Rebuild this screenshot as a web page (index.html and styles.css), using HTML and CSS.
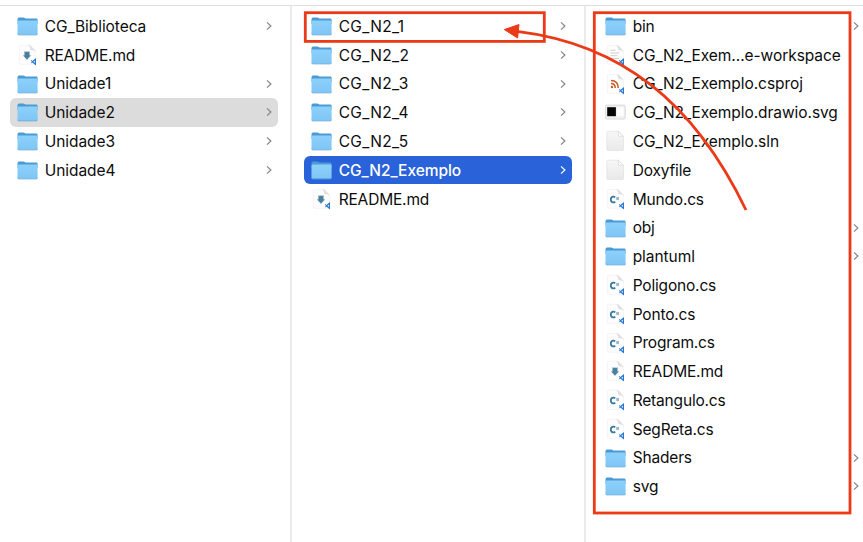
FILE: index.html
```
<!DOCTYPE html>
<html lang="pt">
<head>
<meta charset="utf-8">
<title>Unidade2</title>
<link rel="stylesheet" href="styles.css">
</head>
<body>
<svg class="defs" aria-hidden="true">
  <defs>
    <linearGradient id="folder-face" x1="0" y1="0" x2="0" y2="1"><stop offset="0" stop-color="#8dd0fb"/><stop offset="1" stop-color="#7fc6f5"/></linearGradient>
    <linearGradient id="paper" x1="0" y1="0" x2="0" y2="1"><stop offset="0" stop-color="#f7f7f7"/><stop offset="1" stop-color="#e9e9e9"/></linearGradient>
    <symbol id="folder" viewBox="0 0 21 22">
      <path d="M.5 4.2Q.5 2.6 2 2.6h4.300q.8 0 1.400.5l.7.5h11q1.200 0 1.200 1.400V9H.5z" fill="#4a9bd5"/>
      <path d="M.5 7Q.5 5.500 1.700 5.500h17.600q1.300 0 1.300 1.200v11.800q0 1.300-1.300 1.300H1.700q-1.200 0-1.200-1.300z" fill="url(#folder-face)"/>
      <path d="M.7 18.700q.1 1.200 1.200 1.200h17.300q1.200 0 1.300-1.200" fill="none" stroke="#5ca8d9" stroke-width=".8"/>
    </symbol>
    <symbol id="page" viewBox="0 0 21 22">
      <path d="M3.500 1.300h9.800l5.300 5.400v12.500q0 1.200-1.200 1.200H3.500q-1.200 0-1.200-1.200V2.500q0-1.200 1.200-1.200z" fill="#fdfdfd" stroke="#efefef" stroke-width=".6"/>
      <path d="M11 1.500h2.300l4.800 5.200v1q-1-1.400-3.600-1.400-1.300 0-1.300-1.500Q13.200 2 11 1.500z" fill="#dedede"/>
    </symbol>
    <symbol id="code-badge" viewBox="0 0 21 22">
      <path d="M18.400 15.200v5L15.300 17.700z" fill="#fff" stroke="#2877d3" stroke-width="1.200"/><path d="M14.200 16.400l2.100 1.900M14.200 19l2.100-1.900" stroke="#2877d3" stroke-width="1"/>
    </symbol>
    <symbol id="blank" viewBox="0 0 21 22">
      <path d="M2.800 1.200h10.700l5 5.200v13q0 1.100-1.100 1.100H2.900q-1.100 0-1.100-1.100V2.300q0-1.100 1-1.100z" fill="url(#paper)" stroke="#dedede" stroke-width=".6"/>
      <path d="M13.400 1.300v3.800q0 1.300 1.300 1.300h3.700z" fill="#fbfbfb" stroke="#d3d3d3" stroke-width=".6"/>
    </symbol>
    <symbol id="markdown" viewBox="0 0 21 22">
      <use href="#page"/><path d="M7.700 7.600l1.300.7 1-.7 1 .7 1.300-.7v4h1.300L10 15.500l-3.600-3.900h1.300z" fill="#497f9e" stroke="#497f9e" stroke-width=".4"/><use href="#code-badge"/>
    </symbol>
    <symbol id="csharp" viewBox="0 0 21 22">
      <use href="#page"/><path d="M10.200 9.300q-1-.8-2.200-.6-2.200.4-2.200 2.800 0 2.700 2.500 2.900 1 0 2-.7" fill="none" stroke="#36799f" stroke-width="1.700"/><path d="M12 8.900v3.200M13.200 8.900v3.200M11.300 9.900h2.600M11.300 11.100h2.600" stroke="#5f94b5" stroke-width=".6"/><use href="#code-badge"/>
    </symbol>
    <symbol id="feed" viewBox="0 0 21 22">
      <use href="#page"/><circle cx="7" cy="14" r="1.200" fill="#c45a26"/><path d="M6 10.600q4.100.1 4.200 4.300M6 7.400q7.200.2 7.300 7.500" fill="none" stroke="#c45a26" stroke-width="1.500"/><use href="#code-badge"/>
    </symbol>
    <symbol id="text" viewBox="0 0 21 22">
      <use href="#page"/><path d="M5.500 6.300h5M5.500 9h8.500M5.500 11.700h7M5.500 14.400h8.500" stroke="#cecece" stroke-width="1"/><use href="#code-badge"/>
    </symbol>
    <symbol id="drawing" viewBox="0 0 21 22">
      <rect x=".3" y="4.100" width="20" height="14" rx="1.300" fill="#f0f0f0" stroke="#d0d0d0" stroke-width=".7"/><path d="M2.200 6.200h8.700v9H2.200z" fill="#050505"/><path d="M12.200 6.200h2.500v9h-2.500zM15.300 6.200h3.200v9h-3.200z" fill="#fff"/>
    </symbol>
    <symbol id="chevron" viewBox="0 0 6 10"><path d="M1 1.400 4.900 5 1 8.600" fill="none" stroke="currentColor" stroke-width="1.200"/></symbol>
  </defs>
</svg>
<main class="browser">
  <ul class="column">
    <li class="row"><svg class="icon"><use href="#folder"/></svg><span class="name">CG_Biblioteca</span><svg class="chevron"><use href="#chevron"/></svg></li>
    <li class="row"><svg class="icon"><use href="#markdown"/></svg><span class="name tight">README.md</span></li>
    <li class="row"><svg class="icon"><use href="#folder"/></svg><span class="name">Unidade1</span><svg class="chevron"><use href="#chevron"/></svg></li>
    <li class="row open"><svg class="icon"><use href="#folder"/></svg><span class="name">Unidade2</span><svg class="chevron"><use href="#chevron"/></svg></li>
    <li class="row"><svg class="icon"><use href="#folder"/></svg><span class="name">Unidade3</span><svg class="chevron"><use href="#chevron"/></svg></li>
    <li class="row"><svg class="icon"><use href="#folder"/></svg><span class="name">Unidade4</span><svg class="chevron"><use href="#chevron"/></svg></li>
  </ul>
  <ul class="column">
    <li class="row"><svg class="icon"><use href="#folder"/></svg><span class="name wide">CG_N2_1</span><svg class="chevron"><use href="#chevron"/></svg></li>
    <li class="row"><svg class="icon"><use href="#folder"/></svg><span class="name wide">CG_N2_2</span><svg class="chevron"><use href="#chevron"/></svg></li>
    <li class="row"><svg class="icon"><use href="#folder"/></svg><span class="name wide">CG_N2_3</span><svg class="chevron"><use href="#chevron"/></svg></li>
    <li class="row"><svg class="icon"><use href="#folder"/></svg><span class="name wide">CG_N2_4</span><svg class="chevron"><use href="#chevron"/></svg></li>
    <li class="row"><svg class="icon"><use href="#folder"/></svg><span class="name wide">CG_N2_5</span><svg class="chevron"><use href="#chevron"/></svg></li>
    <li class="row selected"><svg class="icon"><use href="#folder"/></svg><span class="name">CG_N2_Exemplo</span><svg class="chevron"><use href="#chevron"/></svg></li>
    <li class="row"><svg class="icon"><use href="#markdown"/></svg><span class="name tight">README.md</span></li>
  </ul>
  <ul class="column">
    <li class="row"><svg class="icon"><use href="#folder"/></svg><span class="name tight">bin</span><svg class="chevron"><use href="#chevron"/></svg></li>
    <li class="row"><svg class="icon"><use href="#text"/></svg><span class="name">CG_N2_Exem...e-workspace</span></li>
    <li class="row"><svg class="icon"><use href="#feed"/></svg><span class="name">CG_N2_Exemplo.csproj</span></li>
    <li class="row"><svg class="icon"><use href="#drawing"/></svg><span class="name">CG_N2_Exemplo.drawio.svg</span></li>
    <li class="row"><svg class="icon"><use href="#blank"/></svg><span class="name">CG_N2_Exemplo.sln</span></li>
    <li class="row"><svg class="icon"><use href="#blank"/></svg><span class="name tight">Doxyfile</span></li>
    <li class="row"><svg class="icon"><use href="#csharp"/></svg><span class="name tight">Mundo.cs</span></li>
    <li class="row"><svg class="icon"><use href="#folder"/></svg><span class="name tight">obj</span><svg class="chevron"><use href="#chevron"/></svg></li>
    <li class="row"><svg class="icon"><use href="#folder"/></svg><span class="name">plantuml</span><svg class="chevron"><use href="#chevron"/></svg></li>
    <li class="row"><svg class="icon"><use href="#csharp"/></svg><span class="name tight">Poligono.cs</span></li>
    <li class="row"><svg class="icon"><use href="#csharp"/></svg><span class="name tight">Ponto.cs</span></li>
    <li class="row"><svg class="icon"><use href="#csharp"/></svg><span class="name tight">Program.cs</span></li>
    <li class="row"><svg class="icon"><use href="#markdown"/></svg><span class="name tight">README.md</span></li>
    <li class="row"><svg class="icon"><use href="#csharp"/></svg><span class="name tight">Retangulo.cs</span></li>
    <li class="row"><svg class="icon"><use href="#csharp"/></svg><span class="name tight">SegReta.cs</span></li>
    <li class="row"><svg class="icon"><use href="#folder"/></svg><span class="name tight">Shaders</span><svg class="chevron"><use href="#chevron"/></svg></li>
    <li class="row"><svg class="icon"><use href="#folder"/></svg><span class="name tight">svg</span><svg class="chevron"><use href="#chevron"/></svg></li>
  </ul>
</main>
<svg class="annotations" viewBox="0 0 863 542" aria-hidden="true">
  <rect x="305.300" y="12.700" width="239" height="28.700"/>
  <rect x="594.300" y="12.700" width="255.700" height="500.300"/>
  <path d="M517 31.300C621 44 694 102 746 210"/>
  <path class="head" d="M504.300 29.600 519 24.500 517.600 38z"/>
</svg>
</body>
</html>
```
FILE: styles.css
```
* { box-sizing: border-box; }

body {
  margin: 0;
  width: 863px;
  height: 542px;
  overflow: hidden;
  background: #fff;
  color: #0c0c0c;
  font: 400 15.5px/1 Inter, "Liberation Sans", sans-serif;
}

.defs { position: absolute; width: 0; height: 0; }

.browser {
  display: grid;
  grid-template-columns: 292px 294px 294px;
  height: 537px;
  margin-top: 5px;
  border-top: 1px solid #dfdfdf;
}

.column {
  list-style: none;
  margin: 0;
  padding: 5.800px 13px 0 10px;
  border-right: 2px solid #ebebeb;
}

.column:nth-child(-n+2) { padding-right: 12px; }
.column + .column { padding-left: 12px; }

.row {
  display: flex;
  align-items: center;
  height: 28.780px;
  padding: 0 6px 0 7px;
  border-radius: 6px;
}

.icon { flex: none; width: 21px; height: 22px; }

.name {
  flex: 1;
  margin-left: 6.700px;
  padding-top: 1px;
  white-space: nowrap;
  letter-spacing: -0.060px;
}

.name.tight { letter-spacing: -0.180px; }
.name.wide { letter-spacing: 0.350px; }

.chevron { flex: none; width: 6px; height: 10px; color: #858585; }

.open { background: #dcdcdc; }

.selected { background: #2962d9; color: #fff; font-weight: 500; }
.selected .chevron { color: #fff; }
.selected .name { letter-spacing: -0.040px; }

.annotations {
  position: absolute;
  top: 0;
  left: 0;
  width: 863px;
  height: 542px;
  fill: none;
  stroke: #ea3a17;
  stroke-width: 2.800;
}

.annotations .head { fill: #ea3a17; stroke-width: 1; }
```
